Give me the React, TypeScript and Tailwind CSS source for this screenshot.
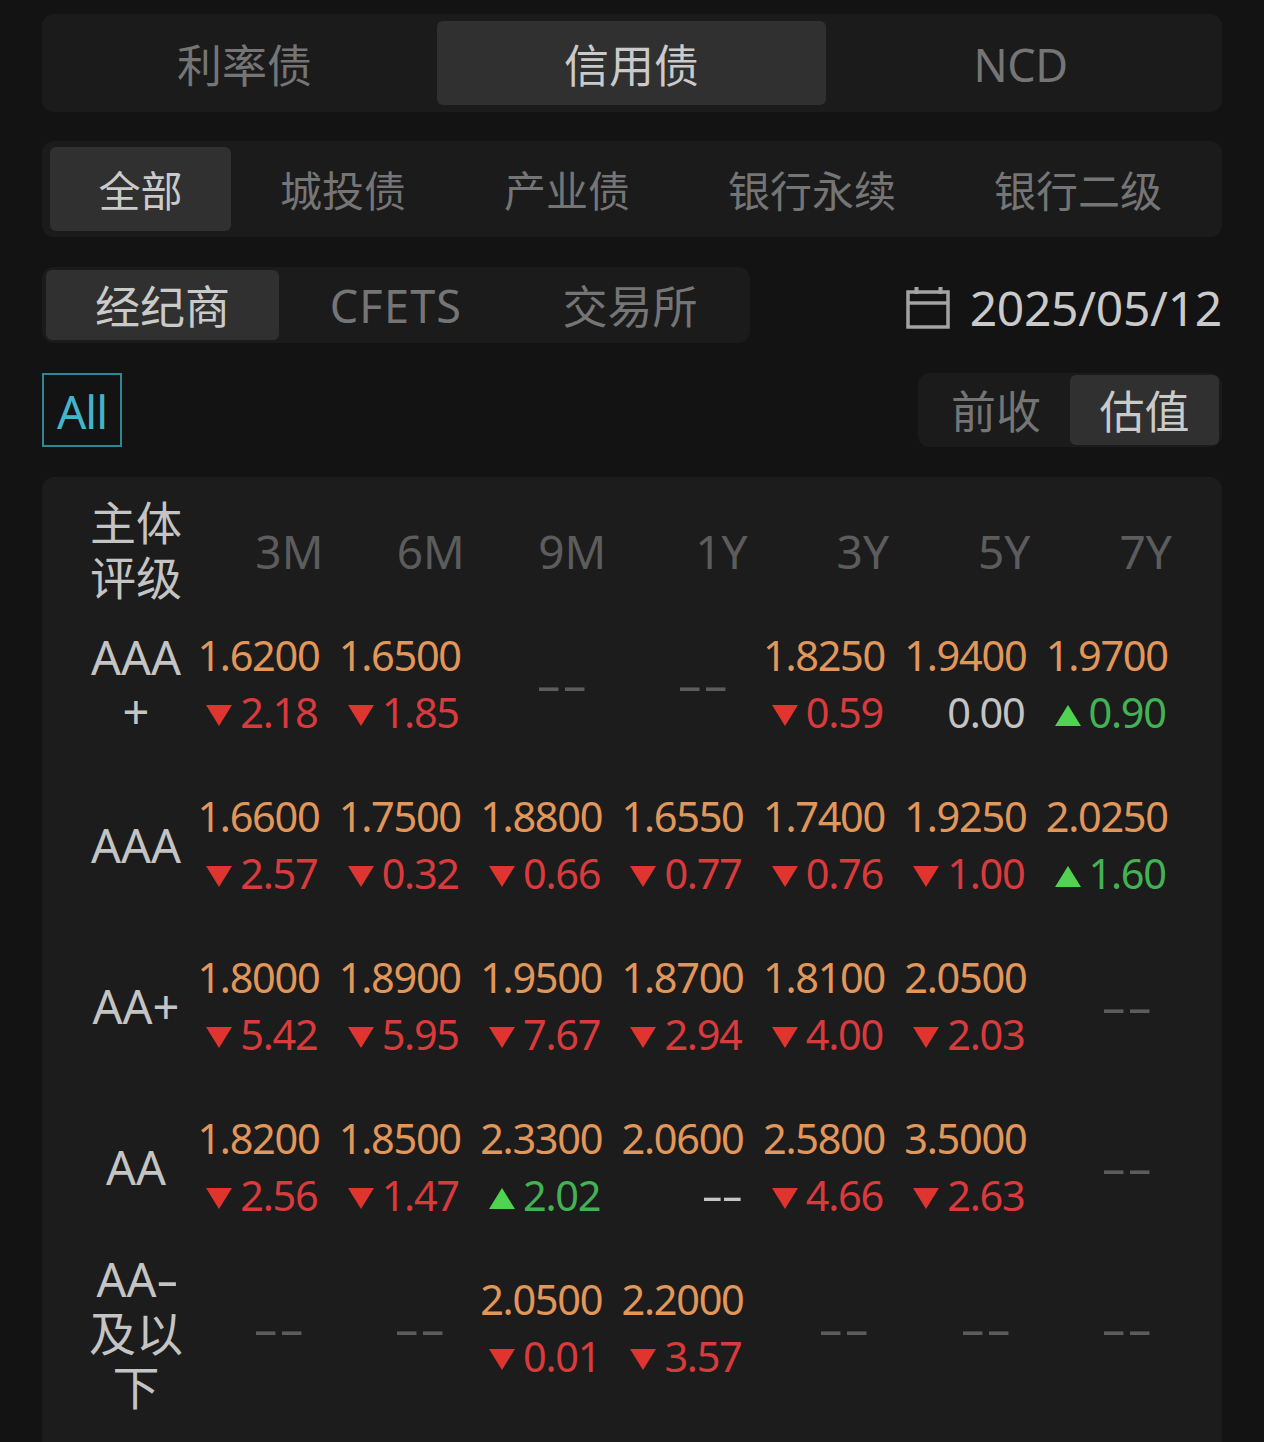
import React, { useState } from "react";

type Trend = "up" | "down" | "flat";

interface IQuote {
  value: string;
  change: string;
  trend: Trend;
}

interface IRating {
  name: string;
  label: React.ReactNode;
  quotes: (IQuote | null)[];
}

const down = (value: string, change: string): IQuote => ({
  value,
  change,
  trend: "down",
});
const up = (value: string, change: string): IQuote => ({
  value,
  change,
  trend: "up",
});
const flat = (value: string, change: string): IQuote => ({
  value,
  change,
  trend: "flat",
});

const terms = ["3M", "6M", "9M", "1Y", "3Y", "5Y", "7Y"];

const ratings: IRating[] = [
  {
    name: "AAA+",
    label: (
      <>
        AAA
        <br />+
      </>
    ),
    quotes: [
      down("1.6200", "2.18"),
      down("1.6500", "1.85"),
      null,
      null,
      down("1.8250", "0.59"),
      flat("1.9400", "0.00"),
      up("1.9700", "0.90"),
    ],
  },
  {
    name: "AAA",
    label: "AAA",
    quotes: [
      down("1.6600", "2.57"),
      down("1.7500", "0.32"),
      down("1.8800", "0.66"),
      down("1.6550", "0.77"),
      down("1.7400", "0.76"),
      down("1.9250", "1.00"),
      up("2.0250", "1.60"),
    ],
  },
  {
    name: "AA+",
    label: "AA+",
    quotes: [
      down("1.8000", "5.42"),
      down("1.8900", "5.95"),
      down("1.9500", "7.67"),
      down("1.8700", "2.94"),
      down("1.8100", "4.00"),
      down("2.0500", "2.03"),
      null,
    ],
  },
  {
    name: "AA",
    label: "AA",
    quotes: [
      down("1.8200", "2.56"),
      down("1.8500", "1.47"),
      up("2.3300", "2.02"),
      flat("2.0600", "--"),
      down("2.5800", "4.66"),
      down("3.5000", "2.63"),
      null,
    ],
  },
  {
    name: "AA-",
    label: (
      <div className="mt-[11px]">
        AA<span className="inline-block origin-left scale-x-[1.5] pr-1">-</span>
        <br />
        及以
        <br />下
      </div>
    ),
    quotes: [
      null,
      null,
      down("2.0500", "0.01"),
      down("2.2000", "3.57"),
      null,
      null,
      null,
    ],
  },
];

interface ITab {
  label: string;
  className: string;
}

interface ITabBar {
  tabs: ITab[];
  initial: number;
  className: string;
}

const TabBar: React.FC<ITabBar> = ({ tabs, initial, className }) => {
  const [active, setActive] = useState(initial);

  return (
    <div className={`flex bg-[#1b1b1b] ${className}`}>
      {tabs.map((tab, i) => (
        <button
          key={tab.label}
          onClick={() => setActive(i)}
          className={`flex items-center justify-center whitespace-nowrap rounded-md ${
            tab.className
          } ${i === active ? "bg-[#303030] text-[#cacaca]" : "text-[#757575]"}`}
        >
          {tab.label}
        </button>
      ))}
    </div>
  );
};

const CalendarIcon = () => (
  <svg width="44" height="44" viewBox="0 0 44 44" fill="none" stroke="#a3a3a3">
    <path d="M2 6H42V41H2Z" strokeWidth="3.5" />
    <path d="M2 17H42" strokeWidth="3.5" />
    <path d="M10.5 1V8M34.5 1V8" strokeWidth="4" />
  </svg>
);

const Triangle: React.FC<{ trend: Trend }> = ({ trend }) => {
  if (trend === "flat") return null;
  return (
    <svg width="26" height="21" viewBox="0 0 26 21" className="mt-1.5">
      {trend === "up" ? (
        <path d="M13 0L26 21H0Z" fill="#4fd351" />
      ) : (
        <path d="M0 0H26L13 21Z" fill="#e0342f" />
      )}
    </svg>
  );
};

const trendColor = {
  up: "text-[#43b254]",
  down: "text-[#d93a3c]",
  flat: "text-[#c4c4c4]",
};

const QuoteCell: React.FC<{ quote: IQuote | null }> = ({ quote }) => {
  if (!quote) {
    return (
      <div className="flex items-center justify-end pr-[23px] text-[46px] text-[#5c5c5c]">
        <span className="origin-right scale-x-[1.75]">--</span>
      </div>
    );
  }
  return (
    <div className="flex flex-col items-end justify-center pr-2 text-[41.5px] leading-[57px] tracking-[-1.3px]">
      <div className="text-[#e2975a]">{quote.value}</div>
      <div
        className={`flex items-center gap-2 pr-0.5 ${trendColor[quote.trend]}`}
      >
        <Triangle trend={quote.trend} />
        {quote.change === "--" ? (
          <span className="origin-right scale-x-[1.65]">--</span>
        ) : (
          quote.change
        )}
      </div>
    </div>
  );
};

const App = () => {
  return (
    <div className="flex h-[1442px] w-[1264px] flex-col overflow-hidden bg-[#131313] px-[42px] pt-3.5 font-['Noto_Sans','Noto_Sans_CJK_SC',sans-serif]">
      <TabBar
        initial={1}
        className="h-[98px] rounded-xl px-1.5 py-[7px] text-[45px]"
        tabs={[
          { label: "利率债", className: "w-[389px] pl-1 pt-1.5" },
          { label: "信用债", className: "w-[389px] pt-1.5" },
          { label: "NCD", className: "w-[389px] pt-1 tracking-[-0.5px]" },
        ]}
      />

      <TabBar
        initial={0}
        className="mt-[29px] h-24 rounded-xl py-1.5 pl-2 text-[42px]"
        tabs={[
          { label: "全部", className: "w-[181px] pt-0.5" },
          { label: "城投债", className: "w-[224px] pt-0.5" },
          { label: "产业债", className: "w-[224px] pt-0.5" },
          { label: "银行永续", className: "w-[266px] pt-0.5" },
          { label: "银行二级", className: "w-[266px] pt-0.5" },
        ]}
      />

      <div className="mt-[30px] flex h-[76px] items-center justify-between">
        <TabBar
          initial={0}
          className="h-[76px] w-[708px] rounded-xl py-[3px] pl-1 text-[45px]"
          tabs={[
            { label: "经纪商", className: "w-[233px] pt-1" },
            { label: "CFETS", className: "w-[234px] pt-0.5 tracking-[1.2px]" },
            { label: "交易所", className: "w-[234px] pt-1" },
          ]}
        />
        <div className="flex items-center gap-5 pt-1.5 text-5xl tracking-[-0.3px] text-[#cacaca]">
          <CalendarIcon />
          2025/05/12
        </div>
      </div>

      <div className="mt-[30px] flex h-[74px] items-center justify-between">
        <button className="h-[74px] w-20 border-2 border-[#2f8793] pt-0.5 text-[46px] tracking-[-1px] text-[#45b3cb]">
          All
        </button>
        <TabBar
          initial={1}
          className="h-[74px] w-[304px] rounded-xl py-0.5 pl-1 text-[45px]"
          tabs={[
            { label: "前收", className: "w-[148px] pt-1" },
            { label: "估值", className: "w-[149px] pt-1" },
          ]}
        />
      </div>

      {/* yield table */}
      <div className="mt-[30px] flex-1 rounded-t-xl bg-[#1c1c1c] pl-11">
        <div className="grid h-[126px] grid-cols-[100px_repeat(7,141.4px)] items-center pt-[18px]">
          <div className="text-center text-[46px] leading-[55px] text-[#c4c4c4]">
            主体
            <br />
            评级
          </div>
          {terms.map((term) => (
            <div
              key={term}
              className="pr-1 pt-0.5 text-right text-[46px] text-[#5c5c5c]"
            >
              {term}
            </div>
          ))}
        </div>
        {ratings.map((rating) => (
          <div
            key={rating.name}
            className="grid grid-cols-[100px_repeat(7,141.4px)] grid-rows-[161px]"
          >
            <div className="flex flex-col justify-center text-center text-[47px] leading-[54px] text-[#c4c4c4]">
              <div>{rating.label}</div>
            </div>
            {rating.quotes.map((quote, i) => (
              <QuoteCell key={terms[i]} quote={quote} />
            ))}
          </div>
        ))}
      </div>
    </div>
  );
};

export default App;
